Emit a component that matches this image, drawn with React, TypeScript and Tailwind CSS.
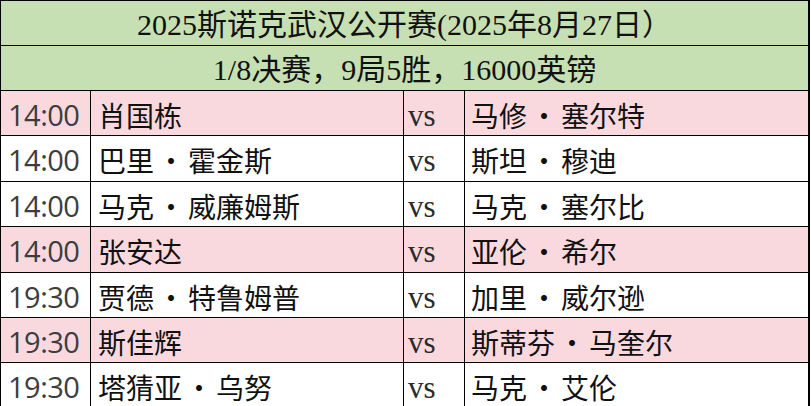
const MATCHES = [
  { time: "14:00", a: ["肖国栋"], b: ["马修", "塞尔特"], pink: true },
  { time: "14:00", a: ["巴里", "霍金斯"], b: ["斯坦", "穆迪"], pink: false },
  { time: "14:00", a: ["马克", "威廉姆斯"], b: ["马克", "塞尔比"], pink: false },
  { time: "14:00", a: ["张安达"], b: ["亚伦", "希尔"], pink: true },
  { time: "19:30", a: ["贾德", "特鲁姆普"], b: ["加里", "威尔逊"], pink: false },
  { time: "19:30", a: ["斯佳辉"], b: ["斯蒂芬", "马奎尔"], pink: true },
  { time: "19:30", a: ["塔猜亚", "乌努"], b: ["马克", "艾伦"], pink: false },
];

// row heights incl. bottom border, so the grid lines land where the sheet has them
const ROW_H = ["h-[45px]", "h-[46px]", "h-[45px]", "h-[46px]", "h-[45px]", "h-[45px]", "h-[45px]"];

const serif = "font-['Liberation_Serif','Noto_Sans_CJK_SC',serif]";
const cjk = "font-['Noto_Sans_CJK_SC',sans-serif]";

function Name({ parts }: { parts: string[] }) {
  return (
    <span className="flex items-center">
      {parts.map((p, i) => (
        <span key={i} className="flex items-center">
          {i > 0 && <span className="inline-block w-[34px] text-center">•</span>}
          {p}
        </span>
      ))}
    </span>
  );
}

export default function App() {
  return (
    <div className="w-[811px] h-[406px] overflow-hidden bg-white">
      <div className="w-[810px] border-t border-l border-r-2 border-black">
        {/* Title rows */}
        <div className={`h-[45px] border-b border-black bg-[#c6e0b4] flex items-center justify-center text-[30px] text-[#111] ${serif}`}>
          <span className="pt-0.5">2025斯诺克武汉公开赛(2025年8月27日）</span>
        </div>
        <div className={`h-[45px] border-b border-black bg-[#c6e0b4] flex items-center justify-center text-[30px] text-[#111] ${serif}`}>
          <span className="pt-0.5">1/8决赛，9局5胜，16000英镑</span>
        </div>

        {/* Match rows */}
        {MATCHES.map((m, i) => (
          <div
            key={i}
            className={`flex border-b border-black ${ROW_H[i]} ${m.pink ? "bg-[#fad9de]" : "bg-white"}`}
          >
            <div className="w-[90px] border-r border-black flex items-center pl-[7px] pt-[3px] text-[29px] text-[#3d3d3d] font-['Open_Sans',sans-serif] tracking-[-0.5px]">
              {m.time}
            </div>
            <div className={`w-[313px] border-r border-black flex items-center pl-[7px] pt-[3px] text-[28px] text-[#111] ${cjk}`}>
              <Name parts={m.a} />
            </div>
            <div className={`w-[61px] border-r border-black flex items-center pl-[4px] pt-[6px] text-[31px] text-[#2a2a2a] ${serif}`}>
              vs
            </div>
            <div className={`flex-1 flex items-center pl-[6px] pt-[3px] text-[28px] text-[#111] ${cjk}`}>
              <Name parts={m.b} />
            </div>
          </div>
        ))}
      </div>
    </div>
  );
}
